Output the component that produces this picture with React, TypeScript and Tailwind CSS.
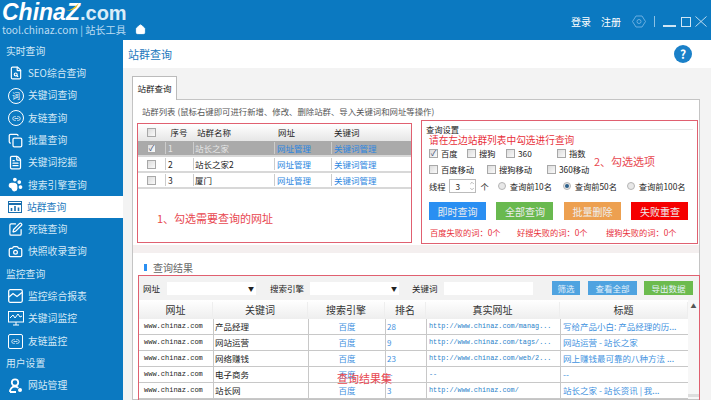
import { Camera, ChevronDown, ChevronUp, FileSearch, FileText, Home, Link2, PawPrint, SquarePen, Copy } from "lucide-react";
import type { ReactNode } from "react";

const font = "[font-family:'Noto_Sans_CJK_SC','Liberation_Sans',sans-serif]";

function CircleIcon({ children }: { children: ReactNode }) {
  return <span className="flex size-[16px] items-center justify-center rounded-full border border-white text-[8px] leading-none">{children}</span>;
}

function Heading({ label }: { label: string }) {
  return <div className="flex h-[22.3px] items-center pl-[6px] text-[9.8px] text-[#d5e9f7]">{label}</div>;
}

function NavItem({ icon, label, active }: { icon: ReactNode; label: string; active?: boolean }) {
  return (
    <div className={`flex h-[22.3px] items-center pl-[8px] text-[9.8px] ${active ? "bg-white text-[#1b78bd]" : "text-[#d5e9f7]"}`}>
      <span className={`flex shrink-0 ${active ? "w-[19px] text-[#1a6fae]" : "w-[20px] text-white"}`}>{icon}</span>
      {label}
    </div>
  );
}

function Check({ checked }: { checked?: boolean }) {
  return (
    <span className="flex size-[9px] shrink-0 items-center justify-center border border-[#a8a8a8] bg-gradient-to-br from-[#dcdcdc] to-[#fafafa] text-[8px] leading-none text-[#33466e]">
      {checked ? "✓" : ""}
    </span>
  );
}

function Option({ label, checked, width }: { label: string; checked?: boolean; width: string }) {
  return (
    <span className={`flex items-center gap-[3px] whitespace-nowrap ${width}`}>
      <Check checked={checked} />
      {label}
    </span>
  );
}

function Radio({ label, on, width }: { label: string; on?: boolean; width: string }) {
  return (
    <span className={`flex items-center gap-[4px] whitespace-nowrap ${width}`}>
      <span className="flex size-[8px] shrink-0 items-center justify-center rounded-full border border-[#b5b5b5] bg-[#e8e8e8]">
        {on && <span className="size-[4px] rounded-full bg-[#2b5f8a]" />}
      </span>
      {label}
    </span>
  );
}

const sites = [
  { n: "1", name: "站长之家", on: true },
  { n: "2", name: "站长之家2" },
  { n: "3", name: "厦门" },
];

const results = [
  { kw: "产品经理", rank: "28", url: "http://www.chinaz.com/manag...", title: "写给产品小白: 产品经理的历..." },
  { kw: "网站运营", rank: "9", url: "http://www.chinaz.com/tags/...", title: "网站运营 - 站长之家" },
  { kw: "网络赚钱", rank: "23", url: "http://www.chinaz.com/web/2...", title: "网上赚钱最可靠的八种方法 ..." },
  { kw: "电子商务", rank: "--", url: "--", title: "--" },
  { kw: "站长网", rank: "3", url: "http://www.chinaz.com/", title: "站长之家 - 站长资讯 | 我..." },
];

const heads = [
  { label: "网址", w: "w-[74px]" },
  { label: "关键词", w: "w-[95px]" },
  { label: "搜索引擎", w: "w-[77px]" },
  { label: "排名", w: "w-[41px]" },
  { label: "真实网址", w: "w-[134px]" },
  { label: "标题", w: "w-[128px]" },
];

export default function App() {
  return (
    <div className={`flex h-[400px] w-[711px] flex-col overflow-hidden bg-white text-[#222] ${font}`}>
      <header className="flex h-[40px] shrink-0 items-start bg-[#0b79c1] text-white">
        <div className="w-[129px] shrink-0 pl-[2px] pt-[1px]">
          <div className="relative flex h-[23px] items-baseline whitespace-nowrap font-['Liberation_Sans'] text-[23px] font-bold italic leading-[23px]">
            China<span>Z</span>
            <span className="text-[20px] font-bold not-italic text-[#d9ecf8]">.com</span>
            <svg className="absolute left-[64px] top-[2px]" width="14" height="9" viewBox="0 0 14 9">
              <path d="M0 8 C5 7 9 4 13 0 L10 5 C7 7 3 8 0 8Z" fill="#f5c518" />
            </svg>
          </div>
          <div className="whitespace-nowrap text-[10.2px] leading-[12px] text-[#bcdcf2]">tool.chinaz.com | 站长工具</div>
        </div>
        <Home className="ml-[6px] mt-[24px] size-[11px] fill-white" />
        <div className="ml-auto mr-[4px] mt-[14px] flex items-center text-[10px]">
          <span>登录</span>
          <span className="ml-[10px]">注册</span>
          <svg className="ml-[11px]" width="14" height="13" viewBox="0 0 14 13" fill="none" stroke="#6aaee0">
            <path d="M4 1h6l3.5 5.5L10 12H4L.5 6.5Z" />
            <circle cx="7" cy="6.5" r="2" />
          </svg>
          <span className="ml-[8px] h-[11px] w-px bg-[#8cc1e4]" />
          <span className="ml-[8px] mt-[9px] h-[2px] w-[13px] bg-[#cfe5f4]" />
          <span className="ml-[5px] size-[10px] border border-[#cfe5f4]" />
          <svg className="ml-[4px]" width="12" height="11" viewBox="0 0 12 11" stroke="#cfe5f4" strokeWidth="0.9">
            <path d="M0.5 0.5 11.5 10.5M11.5 0.5 0.5 10.5" />
          </svg>
        </div>
      </header>

      <div className="flex min-h-0 flex-1">
        <aside className="w-[123px] shrink-0 bg-[#0b79c1]">
          <Heading label="实时查询" />
          <NavItem icon={<FileSearch className="ml-[1px] size-[14px]" />} label="SEO综合查询" />
          <NavItem icon={<CircleIcon>词</CircleIcon>} label="关键词查询" />
          <NavItem icon={<CircleIcon><Link2 className="size-[9px]" /></CircleIcon>} label="友链查询" />
          <NavItem icon={<Copy className="size-[15px]" />} label="批量查询" />
          <NavItem icon={<FileText className="size-[15px]" />} label="关键词挖掘" />
          <NavItem icon={<PawPrint className="size-[15px] fill-white" />} label="搜索引擎查询" />
          <NavItem active icon={
            <svg width="14" height="12" viewBox="0 0 14 12" fill="none" stroke="currentColor">
              <rect x="0.5" y="0.5" width="13" height="11" />
              <path d="M0 3h14" strokeWidth="2" />
              <path d="M3.5 10V7M7 10V5M10.5 10V6.5" strokeWidth="1.6" />
            </svg>
          } label="站群查询" />
          <NavItem icon={<SquarePen className="size-[15px]" />} label="死链查询" />
          <NavItem icon={<Camera className="size-[15px]" />} label="快照收录查询" />
          <Heading label="监控查询" />
          <NavItem icon={
            <svg width="15" height="14" viewBox="0 0 15 14" fill="none" stroke="currentColor" strokeWidth="1.3">
              <rect x="0.7" y="0.7" width="13.6" height="12.6" rx="1.5" />
              <path d="M1 8l4-3.5 4 3 5-4" />
            </svg>
          } label="监控综合报表" />
          <NavItem icon={
            <svg width="16" height="15" viewBox="0 0 16 15" fill="none" stroke="currentColor">
              <rect x="0.5" y="0.5" width="15" height="10.5" />
              <path d="M2 7l3-3 2 3 3-4 2 3 2-1M5 14h6M8 11v3" />
            </svg>
          } label="关键词监控" />
          <NavItem icon={<span className="flex size-[15px] items-center justify-center rounded-[2px] border border-white"><Link2 className="size-[9px]" /></span>} label="友链监控" />
          <Heading label="用户设置" />
          <NavItem icon={
            <svg className="ml-[1px]" width="14" height="15" viewBox="0 0 14 15" fill="none" stroke="currentColor" strokeWidth="1.8">
              <circle cx="6" cy="4.5" r="3.2" />
              <path d="M1 14c0-3 2-5.5 5-5.5 1.500 0 2.500.5 3.300 1.300M1 14h6" />
              <circle cx="11" cy="12" r="2" fill="currentColor" stroke="none" />
            </svg>
          } label="网站管理" />
        </aside>

        <main className="flex min-w-0 flex-1 flex-col">
          <div className="flex h-[28px] shrink-0 items-center justify-between pl-[5px] pr-[19px] text-[11px] text-[#1b78bd]">
            站群查询
            <span className="flex size-[18px] items-center justify-center rounded-full bg-[#1a80c8] text-[12px] font-bold text-white">?</span>
          </div>
          <div className="flex-1 bg-[#f3f3f3] pl-[9px] pr-[11px] pt-[8px]">
            <div className="relative z-10 mb-[-1px] flex h-[24px] w-[45px] items-center justify-center border border-b-0 border-[#bbb] bg-white text-[8.5px]">站群查询</div>
            <div className="h-[301px] border border-[#c4c4c4] bg-white">
              <div className="flex h-[23px] items-center pl-[9px] text-[8.4px] text-[#555]">站群列表 (鼠标右键即可进行新增、修改、删除站群、导入关键词和网址等操作)</div>

              <div className="flex h-[122px] items-start pl-[4px] pr-[1px]">
                <div className="h-[120px] w-[276px] border border-[#e06070]">
                  <div className="flex h-[17px] items-center bg-gradient-to-b from-white to-[#e6e6e6] text-[8.5px]">
                    <span className="flex w-[27px] justify-center"><Check /></span>
                    <span className="w-[28px] text-center">序号</span>
                    <span className="w-[81px] pl-[4px]">站群名称</span>
                    <span className="w-[57px] pl-[4px]">网址</span>
                    <span className="pl-[3px]">关键词</span>
                  </div>
                  {sites.map((s) => (
                    <div key={s.n} className={`flex h-[16px] items-center border-b-2 border-[#d8d8d8] text-[8.5px] ${s.on ? "bg-[#aaa] text-[#e6e6e6]" : "bg-white"}`}>
                      <span className="flex w-[27px] justify-center"><Check checked={s.on} /></span>
                      <span className="w-[28px] border-l border-[#ccc] pl-[2px]">{s.n}</span>
                      <span className="w-[81px] border-l border-[#ccc] pl-[1px]">{s.name}</span>
                      <span className="w-[57px] border-l border-[#ccc] pl-[2px] text-[#2a86e0]">网址管理</span>
                      <span className="border-l border-[#ccc] pl-[2px] text-[#2a86e0]">关键词管理</span>
                    </div>
                  ))}
                  <div className="pl-[19px] pt-[21px] text-[11px] text-[#e8474f]">1、勾选需要查询的网址</div>
                </div>

                <div className="relative ml-[9px] mt-[-3px] flex h-[124px] w-[278px] flex-col border border-[#e06070] px-[7px] text-[8.25px]">
                  <div className="-mx-[3px] flex h-[16px] items-center gap-[1px] text-[8.25px]">
                    查询设置<span className="h-px flex-1 bg-[#e8e8e8]" />
                  </div>
                  <div className="mt-[-3px] h-[12px] text-[9.7px] leading-[12px] text-[#e8303a]">请在左边站群列表中勾选进行查询</div>
                  <div className="mt-[0.5px] flex h-[13px] items-center">
                    <Option label="百度" checked width="w-[38px]" />
                    <Option label="搜狗" width="w-[39px]" />
                    <Option label="360" width="w-[51px]" />
                    <Option label="指数" width="w-[48px]" />
                  </div>
                  <div className="mt-[3px] flex h-[13px] items-center">
                    <Option label="百度移动" width="w-[58px]" />
                    <Option label="搜狗移动" width="w-[60px]" />
                    <Option label="360移动" width="w-[60px]" />
                  </div>
                  <span className="absolute left-[172px] top-[32px] text-[11px] text-[#e8474f]">2、勾选选项</span>
                  <div className="mt-[2px] flex h-[17px] items-center">
                    <span className="mr-[4px]">线程</span>
                    <span className="flex h-[14px] w-[27px] items-center justify-between border border-[#bbb] pl-[5px]">
                      3
                      <span className="flex flex-col text-[#777]"><ChevronUp className="size-[6px]" /><ChevronDown className="size-[6px]" /></span>
                    </span>
                    <span className="ml-[4px] mr-[9px]">个</span>
                    <Radio label="查询前10名" width="w-[65px]" />
                    <Radio label="查询前50名" on width="w-[64px]" />
                    <Radio label="查询前100名" width="w-[58px]" />
                  </div>
                  <div className="mt-[7.5px] flex gap-[10.5px] text-[10px] text-[#eee]">
                    <span className="flex h-[18px] w-[57px] items-center justify-center bg-[#2a8ff2]">即时查询</span>
                    <span className="flex h-[18px] w-[57px] items-center justify-center bg-[#69b94f]">全部查询</span>
                    <span className="flex h-[18px] w-[57px] items-center justify-center bg-[#eda050]">批量删除</span>
                    <span className="flex h-[18px] w-[57px] items-center justify-center bg-[#f50000]">失败重查</span>
                  </div>
                  <div className="mt-[6px] flex h-[12px] items-center pl-[1px] text-[8.25px] text-[#e8303a]">
                    <span className="w-[87px]">百度失败的词：0个</span>
                    <span className="w-[89px]">好搜失败的词：0个</span>
                    <span>搜狗失败的词：0个</span>
                  </div>
                </div>
              </div>

              <div className="h-[8px] bg-[#f4efef]" />
              <div className="flex h-[22px] items-center pl-[11px] pt-[6px] text-[10px] text-[#666]">
                <span className="mr-[6px] h-[7px] w-[3px] bg-[#2a8ff2]" />查询结果
              </div>

              <div className="relative ml-[5px] h-[125px] w-[562px] overflow-hidden border-l border-r border-t border-[#e06070]">
                <div className="flex h-[24px] items-center bg-[#f2f2f2] pl-[4px] text-[8.5px]">
                  <span className="w-[24px]">网址</span>
                  <span className="flex h-[13px] w-[89px] items-center justify-end bg-white pr-[2px] text-[6px]">▼</span>
                  <span className="ml-[14px] w-[35px]">搜索引擎</span>
                  <span className="ml-[5px] flex h-[13px] w-[89px] items-center justify-end bg-white pr-[2px] text-[6px]">▼</span>
                  <span className="ml-[13px] w-[26px]">关键词</span>
                  <span className="ml-[6px] h-[13px] w-[89px] bg-white" />
                  <span className="ml-[19px] flex h-[14px] w-[28px] items-center justify-center bg-[#4fa3e0] text-[#e6f2fb]">筛选</span>
                  <span className="ml-[8px] flex h-[14px] w-[49px] items-center justify-center bg-[#4fa3e0] text-[#e6f2fb]">查看全部</span>
                  <span className="ml-[7px] flex h-[14px] w-[49px] items-center justify-center bg-[#6cbb4e] text-[#e6f2fb]">导出数据</span>
                </div>
                <div className="flex">
                  <div className="w-[549px] shrink-0">
                    <div className="flex h-[19px] items-center bg-gradient-to-b from-white to-[#eee] text-[10px] text-[#333]">
                      {heads.map((h) => (
                        <span key={h.label} className={`${h.w} border-r border-[#eee] text-center`}>{h.label}</span>
                      ))}
                    </div>
                    {results.map((r) => (
                      <div key={r.kw} className="flex h-[16px] items-center border-b border-[#c8c8c8] text-[8.5px] leading-[15px]">
                        <span className="w-[74px] pl-[5px] font-['Liberation_Mono'] text-[7px]">www.chinaz.com</span>
                        <span className="w-[95px] border-l border-[#c8c8c8] pl-[1px]">{r.kw}</span>
                        <span className="w-[77px] border-l border-[#c8c8c8] text-center text-[#3f92e0]">百度</span>
                        <span className="w-[41px] border-l border-[#c8c8c8] pl-[1px] text-[8px] text-[#3f92e0]">{r.rank}</span>
                        <span className="w-[134px] overflow-hidden whitespace-nowrap border-l border-[#c8c8c8] pl-[2px] font-['Liberation_Mono'] text-[6.8px] text-[#2a7fc9]">{r.url}</span>
                        <span className="w-[128px] overflow-hidden whitespace-nowrap border-l border-[#c8c8c8] pl-[2px] text-[#3f92e0]">{r.title}</span>
                      </div>
                    ))}
                  </div>
                  <div className="flex flex-1 flex-col justify-between bg-[#f7f7f7] pb-[2px] text-center text-[6px] leading-[12px] text-[#555]">
                    ▲
                    <span className="h-[3px] w-full bg-[#ddd]" />
                  </div>
                </div>
                <span className="absolute left-[198px] top-[94px] text-[11px] leading-[16px] text-[#e8474f]">查询结果集</span>
              </div>
            </div>
          </div>
        </main>
      </div>
    </div>
  );
}
